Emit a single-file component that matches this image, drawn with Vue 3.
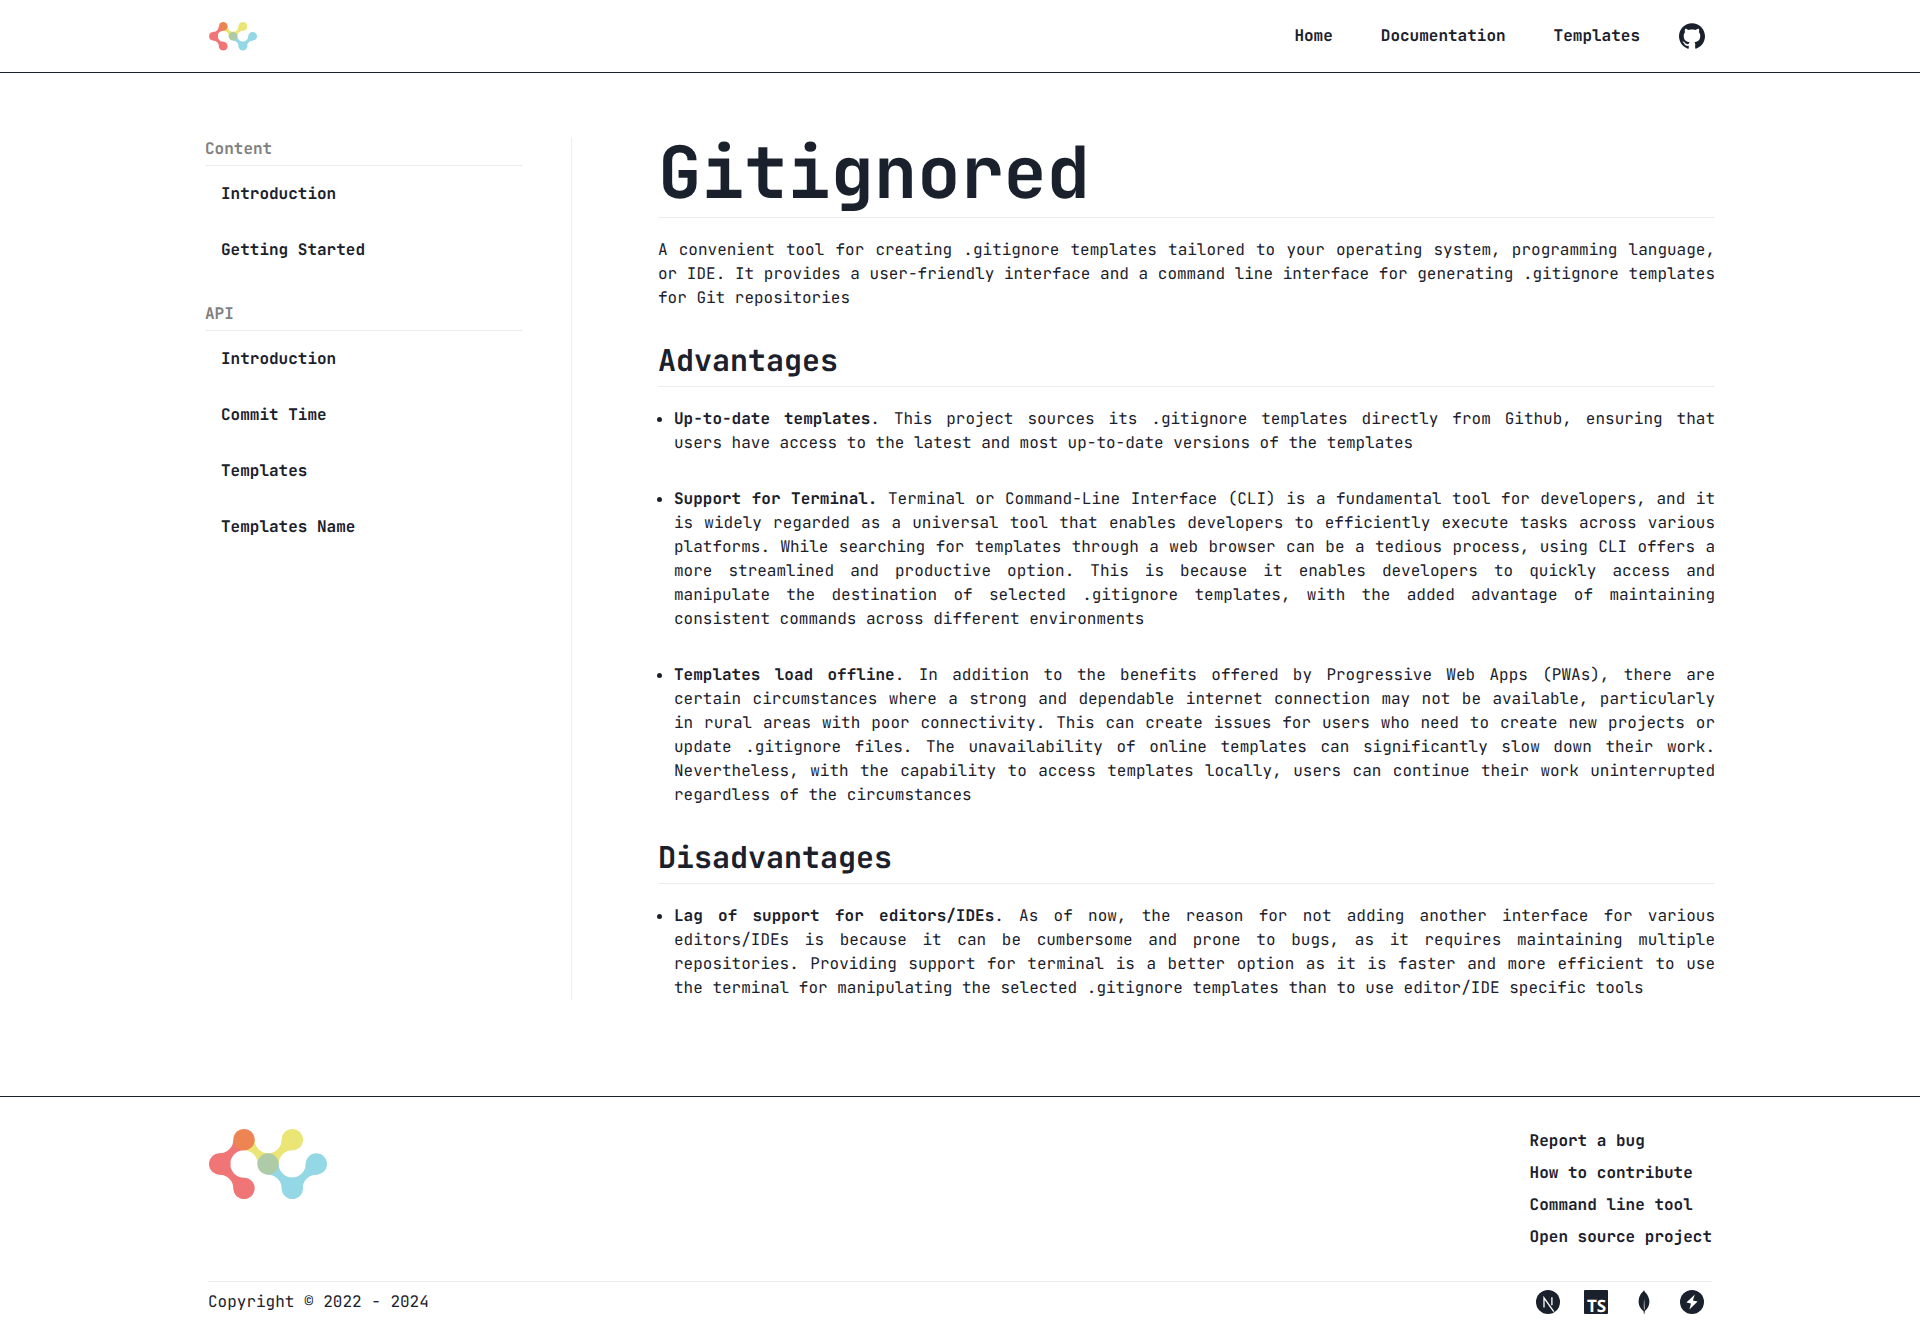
<script setup>
import { h } from 'vue'

const navLinks = ['Home', 'Documentation', 'Templates']

const menu = [
  { title: 'Content', links: ['Introduction', 'Getting Started'] },
  { title: 'API', links: ['Introduction', 'Commit Time', 'Templates', 'Templates Name'] },
]

const sections = [
  {
    title: 'Advantages',
    items: [
      {
        lead: 'Up-to-date templates',
        text: 'This project sources its .gitignore templates directly from Github, ensuring that users have access to the latest and most up-to-date versions of the templates',
      },
      {
        lead: 'Support for Terminal.',
        text: 'Terminal or Command-Line Interface (CLI) is a fundamental tool for developers, and it is widely regarded as a universal tool that enables developers to efficiently execute tasks across various platforms. While searching for templates through a web browser can be a tedious process, using CLI offers a more streamlined and productive option. This is because it enables developers to quickly access and manipulate the destination of selected .gitignore templates, with the added advantage of maintaining consistent commands across different environments',
      },
      {
        lead: 'Templates load offline',
        text: 'In addition to the benefits offered by Progressive Web Apps (PWAs), there are certain circumstances where a strong and dependable internet connection may not be available, particularly in rural areas with poor connectivity. This can create issues for users who need to create new projects or update .gitignore files. The unavailability of online templates can significantly slow down their work. Nevertheless, with the capability to access templates locally, users can continue their work uninterrupted regardless of the circumstances',
      },
    ],
  },
  {
    title: 'Disadvantages',
    items: [
      {
        lead: 'Lag of support for editors/IDEs',
        text: 'As of now, the reason for not adding another interface for various editors/IDEs is because it can be cumbersome and prone to bugs, as it requires maintaining multiple repositories. Providing support for terminal is a better option as it is faster and more efficient to use the terminal for manipulating the selected .gitignore templates than to use editor/IDE specific tools',
      },
    ],
  },
]

const footerLinks = ['Report a bug', 'How to contribute', 'Command line tool', 'Open source project']

const logoNodes = [
  [32, 105, '#f07576'],
  [105, 178, '#f07576'],
  [250, 32, '#ebe576'],
  [250, 178, '#93d8e4'],
  [322, 105, '#93d8e4'],
  [105, 32, '#ec8454'],
  [177, 105, '#accba6'],
]

const logoLinks = [
  ['#f07576', 'M32 73A41 41 0 0 0 73 32H105V64A41 41 0 0 0 105 146V178H73A41 41 0 0 0 32 137Z'],
  ['#ebe576', 'M137 32A40.5 40.5 0 0 0 218 32H250V64A41 41 0 0 0 209 105H146A41 41 0 0 0 105 64V32Z'],
  ['#93d8e4', 'M209 105A40.5 40.5 0 0 0 290 105H322V137A41 41 0 0 0 281 178H218A41 41 0 0 0 177 137V105Z'],
]

const Logo = () =>
  h('svg', { viewBox: '0 0 354 210', role: 'img', 'aria-label': 'Gitignored' }, [
    ...logoLinks.map(([fill, d]) => h('path', { fill, d })),
    ...logoNodes.map(([cx, cy, fill]) => h('circle', { cx, cy, r: 32, fill })),
  ])
</script>

<template>
  <div class="page">
    <header class="header">
      <div class="container bar">
        <a href="#" class="logo-link"><Logo class="logo-small" /></a>
        <nav class="nav">
          <a v-for="link in navLinks" :key="link" href="#" class="link">{{ link }}</a>
          <a href="#" class="github" aria-label="GitHub">
            <svg viewBox="0 0 24 24" width="26" height="26" fill="currentColor">
              <path d="M12 .297c-6.63 0-12 5.373-12 12 0 5.303 3.438 9.8 8.205 11.385.6.113.82-.258.82-.577 0-.285-.01-1.04-.015-2.04-3.338.724-4.042-1.61-4.042-1.61C4.422 18.07 3.633 17.7 3.633 17.7c-1.087-.744.084-.729.084-.729 1.205.084 1.838 1.236 1.838 1.236 1.07 1.835 2.809 1.305 3.495.998.108-.776.417-1.305.76-1.605-2.665-.3-5.466-1.332-5.466-5.93 0-1.31.465-2.38 1.235-3.22-.135-.303-.54-1.523.105-3.176 0 0 1.005-.322 3.3 1.23.96-.267 1.98-.399 3-.405 1.02.006 2.04.138 3 .405 2.28-1.552 3.285-1.23 3.285-1.23.645 1.653.24 2.873.12 3.176.765.84 1.23 1.91 1.23 3.22 0 4.61-2.805 5.625-5.475 5.92.42.36.81 1.096.81 2.22 0 1.606-.015 2.896-.015 3.286 0 .315.21.69.825.57C20.565 22.092 24 17.592 24 12.297c0-6.627-5.373-12-12-12" />
            </svg>
          </a>
        </nav>
      </div>
    </header>

    <main class="container main">
      <aside class="sidebar">
        <section v-for="group in menu" :key="group.title">
          <h3 class="menu-title">{{ group.title }}</h3>
          <a v-for="link in group.links" :key="link" href="#" class="link menu-link">{{ link }}</a>
        </section>
      </aside>

      <article class="article">
        <h1>Gitignored</h1>
        <p>
          A convenient tool for creating .gitignore templates tailored to your operating system, programming language,
          or IDE. It provides a user-friendly interface and a command line interface for generating .gitignore templates
          for Git repositories
        </p>
        <section v-for="section in sections" :key="section.title">
          <h2>{{ section.title }}</h2>
          <ul>
            <li v-for="item in section.items" :key="item.lead">
              <b>{{ item.lead }}</b><template v-if="!item.lead.endsWith('.')">.</template> {{ item.text }}
            </li>
          </ul>
        </section>
      </article>
    </main>

    <footer class="footer">
      <div class="container">
        <div class="footer-top">
          <Logo class="logo-large" />
          <nav class="footer-nav">
            <a v-for="link in footerLinks" :key="link" href="#" class="link">{{ link }}</a>
          </nav>
        </div>
        <div class="footer-bottom">
          <span>Copyright © 2022 - 2024</span>
          <div class="stack">
            <a href="#" aria-label="Next.js">
              <svg viewBox="0 0 24 24" width="24" height="24">
                <circle cx="12" cy="12" r="12" fill="currentColor" />
                <path d="M8 17.6V7.8L17.8 21.6M15.9 7.3V15.2" fill="none" stroke="#fff" stroke-width="1.3" />
              </svg>
            </a>
            <a href="#" aria-label="TypeScript">
              <svg viewBox="0 0 24 24" width="24" height="24">
                <rect width="24" height="24" rx="1" fill="currentColor" />
                <text x="3" y="22" class="ts">TS</text>
              </svg>
            </a>
            <a href="#" aria-label="MongoDB">
              <svg viewBox="0 0 24 24" width="24" height="24" fill="currentColor">
                <path d="M17.193 9.555c-1.264-5.58-4.252-7.414-4.573-8.115-.28-.394-.53-.954-.735-1.44-.036.495-.055.685-.523 1.184-.723.566-4.438 3.682-4.74 10.02-.282 5.912 4.27 9.435 4.888 9.884l.07.05A73.49 73.49 0 0111.91 24h.481c.114-1.032.284-2.056.51-3.07.417-.296.604-.463.85-.693a11.342 11.342 0 003.639-8.464c.01-.814-.103-1.662-.197-2.218zm-5.336 8.195s0-8.291.275-8.29c.213 0 .49 10.695.49 10.695-.381-.045-.765-1.76-.765-2.405z" />
              </svg>
            </a>
            <a href="#" aria-label="Serverless">
              <svg viewBox="0 0 24 24" width="24" height="24">
                <circle cx="12" cy="12" r="12" fill="currentColor" />
                <path d="M14.8 4.6 6.4 12.5 11 13.6 9.4 19.6 17.6 11.6 12.9 10.5Z" fill="#fff" />
              </svg>
            </a>
          </div>
        </div>
      </div>
    </footer>
  </div>
</template>

<style>
body {
  margin: 0;
  background: #fff;
}
</style>

<style scoped>
.page {
  color: #1a202c;
  font: 16px/24px 'JetBrains Mono', 'Liberation Mono', monospace;
  text-rendering: geometricPrecision;
}

.page svg {
  display: block;
  overflow: visible;
}

.container {
  box-sizing: border-box;
  max-width: 1600px;
  margin: 0 auto;
  padding: 0 48px;
}

a {
  color: inherit;
  text-decoration: none;
}

.link {
  font-weight: 600;
}

.header {
  border-bottom: 1px solid #1a202c;
}

.bar {
  display: flex;
  align-items: center;
  justify-content: space-between;
  height: 72px;
}

.logo-small {
  width: 48px;
  padding: 0 1px;
}

.nav {
  display: flex;
  align-items: center;
  gap: 48px;
}

.github {
  padding-right: 7px;
  margin-left: -9px;
}

.main {
  display: flex;
  gap: 86px;
  padding: 64px 45px 96px;
}

.sidebar {
  box-sizing: border-box;
  display: flex;
  flex: none;
  flex-direction: column;
  gap: 24px;
  width: 367px;
  padding-right: 48px;
  border-right: 1px solid #ededf0;
}

.menu-title {
  margin: 0;
  padding-bottom: 4px;
  border-bottom: 1px solid #ededf0;
  color: #808080;
  font-size: 16px;
  font-weight: 600;
}

.menu-link {
  display: block;
  padding: 16px;
}

.article {
  flex: 1;
  min-width: 0;
  text-align: justify;
}

h1 {
  margin: 0 0 20px;
  padding-bottom: 8px;
  border-bottom: 1px solid #ededed;
  font-size: 72px;
  line-height: 72px;
}

h2 {
  margin: 32px 0 20px;
  padding-bottom: 8px;
  border-bottom: 1px solid #ededed;
  font-size: 30px;
  line-height: 36px;
}

p {
  margin: 0;
}

ul {
  display: grid;
  gap: 32px;
  margin: 0;
  padding-left: 16px;
}

.footer {
  padding: 28px 0 24px;
  border-top: 1px solid #1a202c;
}

.footer-top {
  display: flex;
  align-items: flex-start;
  justify-content: space-between;
  padding-bottom: 28px;
}

.logo-large {
  width: 118px;
  padding: 4px 1px 0;
}

.footer-nav {
  display: grid;
  line-height: 32px;
}

.footer-bottom {
  display: flex;
  justify-content: space-between;
  padding-top: 8px;
  border-top: 1px solid #ededf0;
}

.stack {
  display: flex;
  gap: 24px;
  padding-right: 8px;
}

.ts {
  fill: #fff;
  font: 700 17px 'Open Sans', sans-serif;
}
</style>
